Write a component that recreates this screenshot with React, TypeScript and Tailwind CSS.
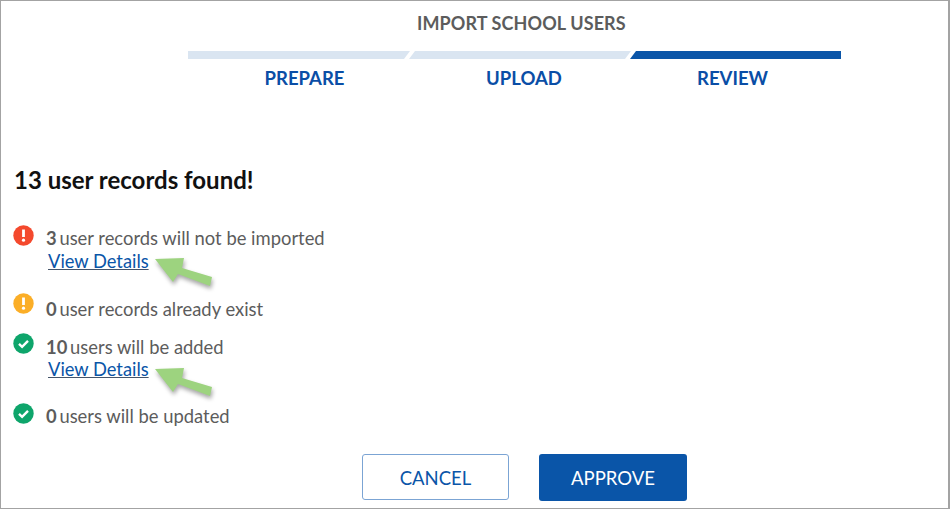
type Tone = "error" | "warn" | "ok";

const toneColor: Record<Tone, string> = {
  error: "#f4492d",
  warn: "#fbae27",
  ok: "#0ea56b",
};

function StatusIcon({ tone }: { tone: Tone }) {
  return (
    <svg width="21" height="21" viewBox="0 0 21 21" className="shrink-0">
      <circle cx="10.5" cy="10.5" r="10.2" fill={toneColor[tone]} />
      {tone === "ok" ? (
        <path d="M6 10.8l3.1 3 5.9-6" fill="none" stroke="#fff" strokeWidth="2.4" />
      ) : (
        <>
          <path d="M10.5 4.5v7.5" stroke="#fff" strokeWidth="2.8" />
          <circle cx="10.5" cy="15.2" r="1.6" fill="#fff" />
        </>
      )}
    </svg>
  );
}

function Arrow({ className }: { className: string }) {
  return (
    <svg
      width="66"
      height="38"
      viewBox="0 0 66 38"
      className={`absolute left-[106px] drop-shadow-[1px_3px_2px_rgba(0,0,0,0.35)] ${className}`}
    >
      <path d="M3 3L32 2L30 12L60 21L58 30L26 18L21 26Z" fill="#9dd37f" />
    </svg>
  );
}

function Row({
  tone,
  count,
  text,
  iconClass,
  linkClass,
  arrowClass,
  className,
}: {
  tone: Tone;
  count: number;
  text: string;
  iconClass: string;
  linkClass?: string;
  arrowClass?: string;
  className?: string;
}) {
  return (
    <div className={`flex gap-[12px] ${className ?? ""}`}>
      <div className={iconClass}>
        <StatusIcon tone={tone} />
      </div>
      <div className="relative">
        <p className="h-[24px] text-[18.4px] leading-[24px] text-[#5c5c5c]">
          <span className="mr-[-2px] font-bold">{count}</span> {text}
        </p>
        {arrowClass && (
          <>
            <a className={`ml-[2px] block h-[22px] text-[18.3px] leading-[22px] text-[#0a55a8] underline decoration-[#44546a] ${linkClass ?? ""}`}>
              View Details
            </a>
            <Arrow className={arrowClass} />
          </>
        )}
      </div>
    </div>
  );
}

const steps = [
  { label: "PREPARE", bar: "w-[222px] bg-[#dae5f1] [clip-path:polygon(0_0,100%_0,calc(100%-6px)_100%,0_100%)]", text: "w-[222px] pl-[11px]" },
  { label: "UPLOAD", bar: "ml-[-1px] w-[222px] bg-[#dae5f1] [clip-path:polygon(6px_0,100%_0,calc(100%-6px)_100%,0_100%)]", text: "w-[221px] pl-[7px]" },
  { label: "REVIEW", bar: "ml-[-1px] w-[211px] bg-[#0a55a8] [clip-path:polygon(6px_0,100%_0,100%_100%,0_100%)]", text: "w-[210px] pr-[7px]" },
];

export default function App() {
  return (
    <div className="h-[509px] w-[950px] border-x-2 border-y border-[#a3a3a3] border-l-[1px] bg-white font-['Lato','Carlito','Liberation_Sans',sans-serif]">
      <h1 className="ml-[416px] mt-[10px] h-[24px] text-[18px] font-bold leading-[24px] tracking-[0.1px] text-[#5c5c5c]">
        IMPORT SCHOOL USERS
      </h1>
      <div className="ml-[187px] mt-[16px] flex h-[8px]">
        {steps.map((s) => (
          <div key={s.label} className={s.bar} />
        ))}
      </div>
      <div className="ml-[187px] mt-[7px] flex">
        {steps.map((s) => (
          <div
            key={s.label}
            className={`${s.text} text-center text-[18.5px] font-bold leading-[24px] text-[#0a4ea6]`}
          >
            {s.label}
          </div>
        ))}
      </div>
      <h2 className="ml-[13px] mt-[74px] text-[24px] font-bold leading-[32px] text-[#111]">
        13 user records found!
      </h2>
      <div className="ml-[12px] mt-[30px]">
        <Row tone="error" count={3} text="user records will not be imported" iconClass="mt-[-1px]" arrowClass="top-[30px]" />
        <Row tone="warn" count={0} text="user records already exist" iconClass="mt-[-4px]" className="mt-[25px]" />
        <Row tone="ok" count={10} text="users will be added" iconClass="mt-[-2px]" linkClass="mt-[-1px]" arrowClass="top-[31px]" className="mt-[14px]" />
        <Row tone="ok" count={0} text="users will be updated" iconClass="mt-[-1px]" className="mt-[24px]" />
      </div>
      <div className="ml-[361px] mt-[26px] flex gap-[30px]">
        <button className="h-[46px] w-[147px] rounded-[3px] border border-[#7ba4d4] bg-white pt-[3px] text-[18.5px] text-[#0a55a8]">
          CANCEL
        </button>
        <button className="h-[47px] w-[148px] rounded-[3px] bg-[#0a55a8] pt-[2px] text-[18.5px] text-white">
          APPROVE
        </button>
      </div>
    </div>
  );
}
